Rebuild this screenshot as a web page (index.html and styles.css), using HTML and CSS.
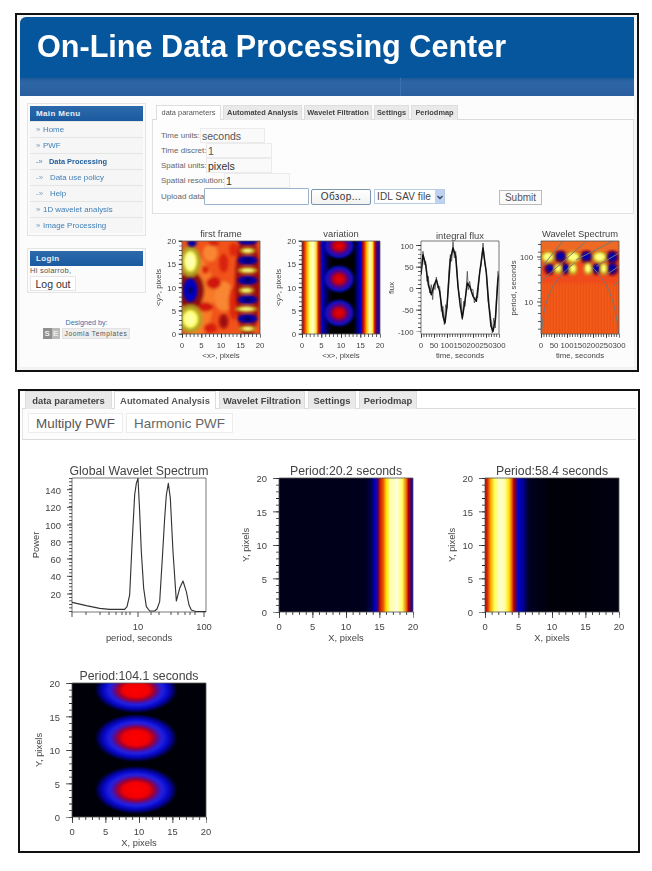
FILE: index.html
```html
<!DOCTYPE html>
<html lang="en">
<head>
<meta charset="utf-8">
<title>On-Line Data Processing Center</title>
<link rel="stylesheet" href="styles.css">
</head>
<body>
<svg class="defs" aria-hidden="true">
  <defs>
    <linearGradient id="g-var">
      <stop offset="0" stop-color="#900010"/><stop offset=".03" stop-color="#e03000"/><stop offset=".07" stop-color="#f8c000"/><stop offset=".1" stop-color="#ffff70"/><stop offset=".14" stop-color="#ffffd0"/><stop offset=".18" stop-color="#ffe040"/><stop offset=".21" stop-color="#d02000"/><stop offset=".235" stop-color="#700040"/><stop offset=".26" stop-color="#0000c0"/><stop offset=".33" stop-color="#000040"/><stop offset=".38" stop-color="#000000"/><stop offset=".66" stop-color="#000000"/><stop offset=".72" stop-color="#000090"/><stop offset=".75" stop-color="#0000d0"/><stop offset=".775" stop-color="#900020"/><stop offset=".8" stop-color="#e83000"/><stop offset=".83" stop-color="#ffc000"/><stop offset=".87" stop-color="#ffffc0"/><stop offset=".905" stop-color="#ffe040"/><stop offset=".93" stop-color="#d02000"/><stop offset=".955" stop-color="#500060"/><stop offset="1" stop-color="#0000c0"/>
    </linearGradient>
    <linearGradient id="g-p20">
      <stop offset="0" stop-color="#000018"/><stop offset=".64" stop-color="#00001c"/><stop offset=".69" stop-color="#000050"/><stop offset=".72" stop-color="#0000d0"/><stop offset=".74" stop-color="#500060"/><stop offset=".75" stop-color="#c01000"/><stop offset=".78" stop-color="#f06000"/><stop offset=".8" stop-color="#ffe000"/><stop offset=".83" stop-color="#ffffa0"/><stop offset=".88" stop-color="#ffffe0"/><stop offset=".92" stop-color="#ffff60"/><stop offset=".95" stop-color="#f07000"/><stop offset=".965" stop-color="#b00000"/><stop offset=".98" stop-color="#600050"/><stop offset="1" stop-color="#0000b0"/>
    </linearGradient>
    <linearGradient id="g-p58">
      <stop offset="0" stop-color="#a00000"/><stop offset=".02" stop-color="#e03000"/><stop offset=".04" stop-color="#f8a000"/><stop offset=".07" stop-color="#ffff50"/><stop offset=".11" stop-color="#ffffd0"/><stop offset=".15" stop-color="#ffffa0"/><stop offset=".18" stop-color="#ffe000"/><stop offset=".2" stop-color="#f06000"/><stop offset=".215" stop-color="#b00000"/><stop offset=".235" stop-color="#400070"/><stop offset=".25" stop-color="#0000d0"/><stop offset=".29" stop-color="#000080"/><stop offset=".33" stop-color="#000020"/><stop offset=".5" stop-color="#000008"/><stop offset="1" stop-color="#000010"/>
    </linearGradient>
    <radialGradient id="g-blob">
      <stop offset="0" stop-color="#ff0000"/><stop offset=".3" stop-color="#f00004"/><stop offset=".42" stop-color="#a00030"/><stop offset=".52" stop-color="#5010a0"/><stop offset=".62" stop-color="#2020e0"/><stop offset=".75" stop-color="#0808c8"/><stop offset=".88" stop-color="#000060"/><stop offset="1" stop-color="#000000" stop-opacity="0"/>
    </radialGradient>
    <radialGradient id="g-blob-v">
      <stop offset="0" stop-color="#f00000"/><stop offset=".3" stop-color="#c00010"/><stop offset=".5" stop-color="#600080"/><stop offset=".75" stop-color="#1010c0"/><stop offset="1" stop-color="#0000a0" stop-opacity="0"/>
    </radialGradient>
    <pattern id="p-stripes" width="9" height="40" patternUnits="userSpaceOnUse">
      <rect width="9" height="40" fill="#f25a18"/>
      <rect x="3" width="2.5" height="40" fill="#e84a14"/>
    </pattern>
    <filter id="f-soft" x="-5%" y="-5%" width="110%" height="110%"><feGaussianBlur stdDeviation="5"/></filter>
    <filter id="f-soft-sm" x="-5%" y="-5%" width="110%" height="110%"><feGaussianBlur stdDeviation="2.500"/></filter>
    <g id="ticks-sm">
      <path class="frame" d="M30 18H108V111H30Z"/>
      <line class="tick" x1="26.500" y1="18" x2="30" y2="18"/><line class="tick" x1="26.500" y1="41.250" x2="30" y2="41.250"/><line class="tick" x1="26.500" y1="64.500" x2="30" y2="64.500"/><line class="tick" x1="26.500" y1="87.750" x2="30" y2="87.750"/><line class="tick" x1="26.500" y1="111" x2="30" y2="111"/>
    </g>
    <g id="ticks-xy-sm">
      <line class="dash" x1="28.500" y1="18" x2="28.500" y2="111.400" stroke-width="3" stroke-dasharray=".7 3.950"/>
      <line class="dash" x1="30" y1="112.500" x2="108.400" y2="112.500" stroke-width="3" stroke-dasharray=".7 3.200"/>
      <line class="dash" x1="30" y1="113" x2="108.400" y2="113" stroke-width="4" stroke-dasharray=".7 18.800"/>
    </g>
    <g id="ticks-lg">
      <path class="frame" d="M42 18H176V152H42Z"/>
      <line class="dash" x1="39" y1="18" x2="39" y2="152.500" stroke-width="6" stroke-dasharray=".8 32.700"/>
      <line class="dash" x1="40.500" y1="18" x2="40.500" y2="152.500" stroke-width="3" stroke-dasharray=".8 5.900"/>
      <line class="dash" x1="42" y1="155" x2="176.500" y2="155" stroke-width="6" stroke-dasharray=".8 32.700"/>
      <line class="dash" x1="42" y1="153.500" x2="176.500" y2="153.500" stroke-width="3" stroke-dasharray=".8 5.900"/>
    </g>
  </defs>
</svg>

<section class="panel panel-site">
  <header class="site-head">
    <h1 class="site-title">On-Line Data Processing Center</h1>
    <div class="site-bar"><span class="site-bar-seg"></span><span class="site-bar-seg"></span></div>
  </header>
  <div class="site-body">
    <aside class="side">
      <nav class="module">
        <h2 class="module-title">Main Menu</h2>
        <a class="item" href="#"><span class="chev">»</span>Home</a>
        <a class="item" href="#"><span class="chev">»</span>PWF</a>
        <a class="item sub active" href="#"><span class="chev">-»</span>Data Processing</a>
        <a class="item sub" href="#"><span class="chev">-»</span>Data use policy</a>
        <a class="item sub" href="#"><span class="chev">-»</span>Help</a>
        <a class="item" href="#"><span class="chev">»</span>1D wavelet analysis</a>
        <a class="item" href="#"><span class="chev">»</span>Image Processing</a>
      </nav>
      <div class="module module-login">
        <h2 class="module-title login-title">Login</h2>
        <p class="hello">Hi solarrob,</p>
        <button class="logout" type="button">Log out</button>
      </div>
      <div class="credit">
        <p class="credit-line">Designed by:</p>
        <div class="badge">
          <span class="badge-mark"><span class="badge-s">S</span><span class="badge-s light">E</span></span>
          <span class="badge-text">Joomla Templates</span>
        </div>
      </div>
    </aside>
    <main class="main">
      <div class="tabs tabs-sm">
        <span class="tab current">data parameters</span>
        <span class="tab">Automated Analysis</span>
        <span class="tab">Wavelet Filtration</span>
        <span class="tab">Settings</span>
        <span class="tab">Periodmap</span>
      </div>
      <form class="params">
        <div class="row"><label class="lbl l39">Time units:</label><input class="field f65" value="seconds"></div>
        <div class="row"><label class="lbl l45">Time discret:</label><input class="field f66" value="1"></div>
        <div class="row"><label class="lbl l45">Spatial units:</label><input class="field f66 dark" value="pixels"></div>
        <div class="row"><label class="lbl l63">Spatial resolution:</label><input class="field f66 dark" value="1"></div>
        <div class="row row-up">
          <label class="lbl l43">Upload data</label>
          <span class="file"></span>
          <button class="browse" type="button">Обзор...</button>
          <span class="select">IDL SAV file<span class="arrow"><svg width="8" height="8" viewBox="0 0 8 8"><path d="M1.500 3 4 5.500 6.500 3" fill="none" stroke="#345" stroke-width="1.300"/></svg></span></span>
          <button class="submit" type="button">Submit</button>
        </div>
      </form>
      <div class="plots-sm">
        <svg class="plot-sm" width="120" height="138" viewBox="0 0 120 138">
          <text class="ttl" x="69" y="14">first frame</text>
          <svg x="30" y="18" width="78" height="93" viewBox="515 64 234 279">
            <rect x="515" y="64" width="234" height="279" fill="#f0521a"/>
            <g filter="url(#f-soft)">
              <ellipse cx="560" cy="230" rx="50" ry="120" fill="#f87a28"/>
              <ellipse cx="600" cy="100" rx="22" ry="26" fill="#f88630"/>
              <ellipse cx="640" cy="230" rx="30" ry="45" fill="#f88630"/>
              <ellipse cx="610" cy="190" rx="22" ry="18" fill="#d01808"/>
              <ellipse cx="640" cy="305" rx="14" ry="22" fill="#a00808"/>
              <ellipse cx="585" cy="262" rx="24" ry="14" fill="#d01808"/>
              <ellipse cx="600" cy="325" rx="20" ry="14" fill="#d81c08"/>
              <ellipse cx="640" cy="130" rx="14" ry="28" fill="#d82008"/>
              <ellipse cx="670" cy="250" rx="15" ry="50" fill="#e02808"/>
              <ellipse cx="585" cy="150" rx="10" ry="12" fill="#d82008"/>
              <ellipse cx="610" cy="70" rx="16" ry="10" fill="#d82008"/>
              <ellipse cx="670" cy="90" rx="14" ry="20" fill="#e02808"/>
              <ellipse cx="540" cy="212" rx="42" ry="58" fill="#901010"/>
              <ellipse cx="540" cy="125" rx="32" ry="46" fill="#b0a020"/>
              <ellipse cx="540" cy="298" rx="36" ry="42" fill="#b0a020"/>
              <ellipse cx="712" cy="195" rx="38" ry="160" fill="#a01010"/>
            </g>
            <g filter="url(#f-soft)">
              <ellipse cx="540" cy="125" rx="20" ry="32" fill="#ffff70"/>
              <ellipse cx="540" cy="298" rx="24" ry="28" fill="#ffff60"/>
              <ellipse cx="540" cy="212" rx="22" ry="36" fill="#0000c0"/>
              <ellipse cx="545" cy="70" rx="14" ry="12" fill="#0000a0"/>
              <ellipse cx="712" cy="65" rx="30" ry="10" fill="#0000b0"/>
              <ellipse cx="712" cy="122" rx="30" ry="13" fill="#0000b0"/>
              <ellipse cx="712" cy="182" rx="30" ry="13" fill="#0000b0"/>
              <ellipse cx="712" cy="240" rx="30" ry="13" fill="#0000b0"/>
              <ellipse cx="712" cy="297" rx="30" ry="13" fill="#0000b0"/>
              <ellipse cx="712" cy="93" rx="24" ry="9" fill="#c8b820"/>
              <ellipse cx="712" cy="152" rx="30" ry="9" fill="#c8b820"/>
              <ellipse cx="708" cy="212" rx="24" ry="9" fill="#c8b820"/>
              <ellipse cx="708" cy="268" rx="34" ry="9" fill="#c8b820"/>
              <ellipse cx="712" cy="327" rx="26" ry="9" fill="#c8b820"/>
            </g>
            <g filter="url(#f-soft-sm)">
              <ellipse cx="540" cy="212" rx="7" ry="10" fill="#000050" opacity=".8"/>
              <ellipse cx="540" cy="125" rx="13" ry="22" fill="#ffffc0" opacity=".8"/>
              <ellipse cx="540" cy="298" rx="15" ry="20" fill="#ffffb0" opacity=".8"/>
              <ellipse cx="712" cy="93" rx="13" ry="4" fill="#ffffa0"/>
              <ellipse cx="712" cy="152" rx="17" ry="4" fill="#ffffa0"/>
              <ellipse cx="708" cy="212" rx="13" ry="4" fill="#ffffa0"/>
              <ellipse cx="708" cy="268" rx="21" ry="4" fill="#ffffa0"/>
              <ellipse cx="712" cy="327" rx="14" ry="4" fill="#ffffa0"/>
              <ellipse cx="712" cy="122" rx="10" ry="4" fill="#000040"/>
              <ellipse cx="712" cy="182" rx="10" ry="4" fill="#000040"/>
              <ellipse cx="712" cy="240" rx="10" ry="4" fill="#000040"/>
              <ellipse cx="712" cy="297" rx="10" ry="4" fill="#000040"/>
            </g>
          </svg>
          <use href="#ticks-sm"/><use href="#ticks-xy-sm"/>
          <text class="tk end" x="24" y="21">20</text><text class="tk end" x="24" y="44">15</text><text class="tk end" x="24" y="67.500">10</text><text class="tk end" x="24" y="91">5</text><text class="tk end" x="24" y="114">0</text>
          <text class="tk mid" x="30" y="125">0</text><text class="tk mid" x="49.500" y="125">5</text><text class="tk mid" x="69" y="125">10</text><text class="tk mid" x="88.500" y="125">15</text><text class="tk mid" x="108" y="125">20</text>
          <text class="tk mid" x="69" y="134.500">&lt;x&gt;, pixels</text>
          <text class="tk mid" transform="translate(9 64.500) rotate(-90)">&lt;y&gt;, pixels</text>
        </svg>
        <svg class="plot-sm" width="120" height="138" viewBox="0 0 120 138">
          <text class="ttl" x="69" y="14">variation</text>
          <svg x="30" y="18" width="78" height="93" viewBox="0 0 78 93">
            <rect width="78" height="93" fill="url(#g-var)"/>
            <ellipse cx="37" cy="5" rx="17" ry="14" fill="url(#g-blob-v)"/>
            <ellipse cx="37" cy="38" rx="17" ry="15" fill="url(#g-blob-v)"/>
            <ellipse cx="37" cy="72" rx="17" ry="15" fill="url(#g-blob-v)"/>
          </svg>
          <use href="#ticks-sm"/><use href="#ticks-xy-sm"/>
          <text class="tk end" x="24" y="21">20</text><text class="tk end" x="24" y="44">15</text><text class="tk end" x="24" y="67.500">10</text><text class="tk end" x="24" y="91">5</text><text class="tk end" x="24" y="114">0</text>
          <text class="tk mid" x="30" y="125">0</text><text class="tk mid" x="49.500" y="125">5</text><text class="tk mid" x="69" y="125">10</text><text class="tk mid" x="88.500" y="125">15</text><text class="tk mid" x="108" y="125">20</text>
          <text class="tk mid" x="69" y="134.500">&lt;x&gt;, pixels</text>
          <text class="tk mid" transform="translate(9 64.500) rotate(-90)">&lt;y&gt;, pixels</text>
        </svg>
        <svg class="plot-sm" width="120" height="138" viewBox="0 0 120 138">
          <text class="ttl" x="69" y="15.500">integral flux</text>
          <svg x="30" y="18" width="78" height="93" viewBox="274 64 234 279">
            <polyline class="flux-g" points="274,165 278,120 280,95 284,135 288,125 292,185 296,170 300,220 305,195 309,240 312,195 316,210 320,172 324,205 330,200 335,275 340,260 344,315 348,255 352,265 358,150 362,105 366,125 370,66 374,115 378,95 385,200 390,240 394,235 398,300 402,245 406,260 413,155 416,210 420,185 424,210 430,210 434,250 440,230 444,235 450,155 455,135 460,70 465,130 470,155 475,245 480,270 484,300 488,340 492,295 497,325 500,240 505,155 508,185"/>
            <polyline class="flux" points="274,165 280,105 288,135 296,195 305,225 312,200 320,180 330,215 340,290 346,310 352,260 362,120 370,85 378,110 385,200 392,260 398,295 405,250 413,190 420,200 430,230 440,245 450,160 460,85 470,160 478,260 484,320 490,335 497,300 505,180 508,165"/>
          </svg>
          <path class="frame" d="M30 18H108V111H30Z"/>
          <line class="dash" x1="28.500" y1="22.300" x2="28.500" y2="108.600" stroke-width="3" stroke-dasharray=".7 3.600"/>
          <line class="dash" x1="27.500" y1="22.300" x2="27.500" y2="108.600" stroke-width="5" stroke-dasharray=".7 20.800"/>
          <line class="dash" x1="30" y1="112.500" x2="108.400" y2="112.500" stroke-width="3" stroke-dasharray=".7 1.900"/>
          <line class="dash" x1="30" y1="113" x2="108.400" y2="113" stroke-width="4" stroke-dasharray=".7 12.300"/>
          <text class="tk end" x="22.500" y="25.500">100</text><text class="tk end" x="22.500" y="47">50</text><text class="tk end" x="22.500" y="68.500">0</text><text class="tk end" x="22.500" y="90">-50</text><text class="tk end" x="22.500" y="111.500">-100</text>
          <text class="tk mid" x="30" y="125">0</text><text class="tk mid" x="43" y="125">50</text><text class="tk mid" x="56" y="125">100</text><text class="tk mid" x="69" y="125">150</text><text class="tk mid" x="82" y="125">200</text><text class="tk mid" x="95" y="125">250</text><text class="tk mid" x="108" y="125">300</text>
          <text class="tk mid" x="69" y="134.500">time, seconds</text>
          <text class="tk mid" transform="translate(3 65) rotate(-90)">flux</text>
        </svg>
        <svg class="plot-sm" width="120" height="138" viewBox="0 0 120 138">
          <text class="ttl" x="69" y="14">Wavelet Spectrum</text>
          <svg x="30" y="18" width="78" height="93" viewBox="634 64 234 279">
            <rect x="634" y="64" width="234" height="279" fill="url(#p-stripes)"/>
            <rect x="634" y="64" width="234" height="125" fill="#f0481a" filter="url(#f-soft)"/>
            <rect x="634" y="64" width="234" height="30" fill="#ee6a24"/>
            <g filter="url(#f-soft)">
              <ellipse cx="655" cy="112" rx="22" ry="18" fill="#c8b020"/><ellipse cx="730" cy="112" rx="24" ry="18" fill="#c8b020"/><ellipse cx="810" cy="112" rx="24" ry="18" fill="#c8b020"/>
              <ellipse cx="693" cy="112" rx="20" ry="20" fill="#700030"/><ellipse cx="770" cy="112" rx="20" ry="20" fill="#700030"/><ellipse cx="848" cy="112" rx="20" ry="20" fill="#700030"/>
              <ellipse cx="660" cy="148" rx="17" ry="18" fill="#700030"/><ellipse cx="708" cy="148" rx="15" ry="18" fill="#700030"/><ellipse cx="800" cy="148" rx="15" ry="18" fill="#700030"/><ellipse cx="848" cy="148" rx="18" ry="20" fill="#700030"/>
              <ellipse cx="685" cy="148" rx="12" ry="16" fill="#c8b020"/><ellipse cx="730" cy="148" rx="13" ry="18" fill="#c8b020"/><ellipse cx="775" cy="148" rx="13" ry="18" fill="#c8b020"/><ellipse cx="822" cy="148" rx="12" ry="18" fill="#c8b020"/>
            </g>
            <g filter="url(#f-soft-sm)">
              <ellipse cx="655" cy="112" rx="14" ry="12" fill="#ffff80"/><ellipse cx="730" cy="112" rx="16" ry="12" fill="#ffff80"/><ellipse cx="810" cy="112" rx="16" ry="12" fill="#ffff80"/>
              <ellipse cx="693" cy="110" rx="12" ry="12" fill="#0000b0"/><ellipse cx="770" cy="110" rx="12" ry="12" fill="#0000b0"/><ellipse cx="848" cy="112" rx="12" ry="14" fill="#0000b0"/>
              <ellipse cx="660" cy="146" rx="9" ry="11" fill="#0000b0"/><ellipse cx="708" cy="146" rx="8" ry="12" fill="#0000b0"/><ellipse cx="800" cy="146" rx="8" ry="12" fill="#0000b0"/><ellipse cx="848" cy="146" rx="10" ry="14" fill="#0000b0"/>
              <ellipse cx="685" cy="146" rx="8" ry="10" fill="#ffff70"/><ellipse cx="730" cy="146" rx="8" ry="11" fill="#ffff70"/><ellipse cx="775" cy="146" rx="8" ry="12" fill="#ffff80"/><ellipse cx="822" cy="146" rx="7" ry="12" fill="#ffff70"/>
            </g>
            <g class="coi">
              <path d="M636 343C640 260 655 190 735 130"/>
              <path d="M866 343C860 260 840 190 785 140"/>
              <path d="M634 145 700 64"/>
              <path d="M634 185 770 64"/>
              <path d="M740 120 850 64"/>
              <path d="M800 140 868 100"/>
              <path d="M830 165 868 140"/>
              <path d="M850 200 868 185"/>
            </g>
          </svg>
          <path class="frame" d="M30 18H108V111H30Z"/>
          <line class="tick" x1="26" y1="34" x2="30" y2="34"/><line class="tick" x1="26" y1="79" x2="30" y2="79"/>
          <line class="dash" x1="28.500" y1="21" x2="28.500" y2="111" stroke-width="3" stroke-dasharray=".7 7"/>
          <line class="dash" x1="30" y1="112.500" x2="108.400" y2="112.500" stroke-width="3" stroke-dasharray=".7 1.900"/>
          <line class="dash" x1="30" y1="113" x2="108.400" y2="113" stroke-width="4" stroke-dasharray=".7 12.300"/>
          <text class="tk end" x="22" y="37">100</text><text class="tk end" x="22" y="82">10</text>
          <text class="tk mid" x="30" y="125">0</text><text class="tk mid" x="43" y="125">50</text><text class="tk mid" x="56" y="125">100</text><text class="tk mid" x="69" y="125">150</text><text class="tk mid" x="82" y="125">200</text><text class="tk mid" x="95" y="125">250</text><text class="tk mid" x="108" y="125">300</text>
          <text class="tk mid" x="69" y="134.500">time, seconds</text>
          <text class="tk mid" transform="translate(5 65) rotate(-90)">period, seconds</text>
        </svg>
      </div>
    </main>
  </div>
</section>

<section class="panel panel-analysis">
  <div class="tabs tabs-lg">
    <span class="tab">data parameters</span>
    <span class="tab current">Automated Analysis</span>
    <span class="tab">Wavelet Filtration</span>
    <span class="tab">Settings</span>
    <span class="tab">Periodmap</span>
  </div>
  <div class="subtabs">
    <button class="subtab" type="button">Multiply PWF</button>
    <button class="subtab" type="button">Harmonic PWF</button>
  </div>
  <div class="plots-lg">
    <svg class="plot-lg" width="190" height="185" viewBox="0 0 190 185">
      <text class="ttl-lg" x="109" y="15">Global Wavelet Spectrum</text>
      <path class="frame" d="M42 18H176V152H42Z"/>
      <svg x="42" y="18" width="134" height="134" viewBox="187 280 402 400">
        <polyline class="curve" points="187,652 230,662 270,670 300,673 345,673 352,665 360,630 367,480 375,330 380,295 385,280 390,380 395,500 402,610 410,665 420,678 435,678 442,672 450,650 458,520 465,400 470,330 476,295 482,340 490,500 500,648 510,610 520,588 530,620 538,660 545,675 560,680 589,680"/>
      </svg>
      <line class="tick" x1="37" y1="29.700" x2="42" y2="29.700"/><line class="tick" x1="37" y1="47.300" x2="42" y2="47.300"/><line class="tick" x1="37" y1="65" x2="42" y2="65"/><line class="tick" x1="37" y1="82" x2="42" y2="82"/><line class="tick" x1="37" y1="99" x2="42" y2="99"/><line class="tick" x1="37" y1="116.300" x2="42" y2="116.300"/><line class="tick" x1="37" y1="134" x2="42" y2="134"/>
      <line class="dash" x1="40.500" y1="18" x2="40.500" y2="152" stroke-width="3" stroke-dasharray=".8 2.700"/>
      <path class="tick" d="M42 152v5M56 152v3M70 152v3M79 152v3M86 152v3M92 152v3M96 152v3M100 152v3M108 152v5M121 152v3M129 152v3M141 152v3M148 152v3M155 152v3M160 152v3M165 152v3M174 152v5"/>
      <text class="tk-lg end" x="31" y="33.500">140</text><text class="tk-lg end" x="31" y="51">120</text><text class="tk-lg end" x="31" y="69">100</text><text class="tk-lg end" x="31" y="86">80</text><text class="tk-lg end" x="31" y="103">60</text><text class="tk-lg end" x="31" y="120">40</text><text class="tk-lg end" x="31" y="138">20</text>
      <text class="tk-lg mid" x="108" y="169.500">10</text><text class="tk-lg mid" x="174" y="169.500">100</text>
      <text class="tk-lg mid" x="109" y="181">period, seconds</text>
      <text class="tk-lg mid" transform="translate(9 85) rotate(-90)">Power</text>
    </svg>
    <svg class="plot-lg" width="190" height="185" viewBox="0 0 190 185">
      <text class="ttl-lg" x="109" y="15">Period:20.2 seconds</text>
      <rect x="42" y="18" width="134" height="134" fill="url(#g-p20)"/>
      <use href="#ticks-lg"/>
      <text class="tk-lg end" x="30" y="22">20</text><text class="tk-lg end" x="30" y="55.500">15</text><text class="tk-lg end" x="30" y="89">10</text><text class="tk-lg end" x="30" y="122.500">5</text><text class="tk-lg end" x="30" y="156">0</text>
      <text class="tk-lg mid" x="42" y="169.500">0</text><text class="tk-lg mid" x="75.500" y="169.500">5</text><text class="tk-lg mid" x="109" y="169.500">10</text><text class="tk-lg mid" x="142.500" y="169.500">15</text><text class="tk-lg mid" x="176" y="169.500">20</text>
      <text class="tk-lg mid" x="109" y="181">X, pixels</text>
      <text class="tk-lg mid" transform="translate(12 85) rotate(-90)">Y, pixels</text>
    </svg>
    <svg class="plot-lg" width="190" height="185" viewBox="0 0 190 185">
      <text class="ttl-lg" x="109" y="15">Period:58.4 seconds</text>
      <rect x="42" y="18" width="134" height="134" fill="url(#g-p58)"/>
      <use href="#ticks-lg"/>
      <text class="tk-lg end" x="30" y="22">20</text><text class="tk-lg end" x="30" y="55.500">15</text><text class="tk-lg end" x="30" y="89">10</text><text class="tk-lg end" x="30" y="122.500">5</text><text class="tk-lg end" x="30" y="156">0</text>
      <text class="tk-lg mid" x="42" y="169.500">0</text><text class="tk-lg mid" x="75.500" y="169.500">5</text><text class="tk-lg mid" x="109" y="169.500">10</text><text class="tk-lg mid" x="142.500" y="169.500">15</text><text class="tk-lg mid" x="176" y="169.500">20</text>
      <text class="tk-lg mid" x="109" y="181">X, pixels</text>
      <text class="tk-lg mid" transform="translate(12 85) rotate(-90)">Y, pixels</text>
    </svg>
    <svg class="plot-lg" width="190" height="185" viewBox="0 0 190 185">
      <text class="ttl-lg" x="109" y="15">Period:104.1 seconds</text>
      <svg x="42" y="18" width="134" height="134" viewBox="0 0 134 134">
        <rect width="134" height="134" fill="#000008"/>
        <ellipse cx="64" cy="7" rx="43" ry="24" fill="url(#g-blob)"/>
        <ellipse cx="64" cy="55" rx="43" ry="25" fill="url(#g-blob)"/>
        <ellipse cx="64" cy="107" rx="43" ry="25" fill="url(#g-blob)"/>
      </svg>
      <use href="#ticks-lg"/>
      <text class="tk-lg end" x="30" y="22">20</text><text class="tk-lg end" x="30" y="55.500">15</text><text class="tk-lg end" x="30" y="89">10</text><text class="tk-lg end" x="30" y="122.500">5</text><text class="tk-lg end" x="30" y="156">0</text>
      <text class="tk-lg mid" x="42" y="169.500">0</text><text class="tk-lg mid" x="75.500" y="169.500">5</text><text class="tk-lg mid" x="109" y="169.500">10</text><text class="tk-lg mid" x="142.500" y="169.500">15</text><text class="tk-lg mid" x="176" y="169.500">20</text>
      <text class="tk-lg mid" x="109" y="181">X, pixels</text>
      <text class="tk-lg mid" transform="translate(12 85) rotate(-90)">Y, pixels</text>
    </svg>
  </div>
</section>
</body>
</html>
```
FILE: styles.css
```css
* { box-sizing: border-box; }
html, body { margin: 0; padding: 0; background: #fff; }
body {
  font-family: "Liberation Sans", Arial, sans-serif;
  color: #555;
  width: 652px;
  height: 871px;
  overflow: hidden;
  padding-top: 13px;
}
.defs { position: absolute; width: 0; height: 0; }

.panel { display: block; border: 2px solid #111; background: #fff; }
.panel-site {
  margin-left: 15px;
  width: 624px;
  height: 359px;
  padding: 2px 3px 0;
  background: #f4f5f6;
  box-shadow: inset 0 -4px 0 #f1f3f4;
}
.panel-analysis {
  margin: 17px 0 0 18px;
  width: 622px;
  height: 464px;
  padding: 0 2px;
}

/* header */
.site-head { background: #05569c; border-radius: 6px 0 0 0; height: 79px; display: flex; flex-direction: column; }
.site-title { margin: 0; padding: 11px 0 0 17px; height: 61px; color: #fff; font-size: 30.6px; line-height: 37px; font-weight: 700; filter: blur(.3px); }
.site-bar { height: 18px; display: flex; background: linear-gradient(#1e5a98 0, #2d66a6 4px, #2c64a4 8px, #2a5f9f 100%); }
.site-bar-seg { width: 381px; border-right: 1px solid #3a72ae; }
.site-bar-seg + .site-bar-seg { flex: 1; border: 0; }

.site-body { display: flex; height: 271px; background: #fcfcfc; }

/* sidebar */
.side { width: 132px; padding: 7px 0 0 7px; flex: none; }
.module { width: 119px; border: 1px solid #e2e5e7; background: #fbfbfb; padding: 2px; }
.module-login { margin-top: 12px; height: 45px; }
.module-title { margin: 0; height: 15px; background: linear-gradient(#2d6aac, #1b5a9f); color: #e8f0f8; font-size: 8px; line-height: 15px; padding-left: 6px; letter-spacing: .35px; font-weight: 700; }
.item { display: flex; align-items: center; height: 16px; padding-left: 6px; background: #f6f6f6; border-top: 1px solid #e4e6e6; color: #3f7fb6; font-size: 7.9px; text-decoration: none; filter: blur(.25px); }
.chev { color: #7aa5c8; width: 7px; flex: none; }
.sub .chev { width: 14px; }
.active .chev { width: 13px; }
.active { color: #1f5c99; font-weight: 700; font-size: 7.4px; }
.hello { margin: 0; font-size: 7.6px; line-height: 10px; color: #555; letter-spacing: .2px; }
.logout { display: block; margin: 0; width: 46px; height: 15px; padding: 0; background: #fff; border: 1px solid #e6e6e6; font: 10.5px "Liberation Sans", Arial, sans-serif; color: #333; }
.credit { margin-top: 25px; text-align: center; width: 119px; }
.credit-line { margin: 0; color: #3b6fb0; font-size: 7.2px; line-height: 9px; }
.badge { display: flex; justify-content: center; gap: 2px; margin-top: 1px; height: 11px; align-items: stretch; }
.badge-mark { display: flex; width: 17px; }
.badge-s { flex: 1; background: #8f8f8f; color: #eee; font-size: 8px; line-height: 11px; font-weight: 700; }
.badge-s.light { background: #bbb; }
.badge-text { width: 68px; background: #eee; border: 1px solid #e2e2e2; color: #555; font-size: 6.6px; line-height: 9px; letter-spacing: .62px; white-space: nowrap; }

/* tabs */
.main { flex: 1; padding: 9px 0 0; min-width: 0; }
.tabs { display: flex; border-bottom: 1px solid #d8dadb; }
.tab { display: block; background: #e9e9e9; border: 1px solid #ddd; border-bottom: 0; font-weight: 700; color: #444; text-align: center; white-space: nowrap; filter: blur(.25px); }
.tab.current { background: #fff; color: #555; }
.tabs-sm { height: 15px; padding-left: 4px; gap: 2px; }
.tabs-sm .tab { font-size: 7.4px; line-height: 14px; height: 15px; }
.tabs-sm .tab:nth-child(1) { width: 65px; font-weight: 400; }
.tabs-sm .tab:nth-child(2) { width: 79px; }
.tabs-sm .tab:nth-child(3) { width: 68px; }
.tabs-sm .tab:nth-child(4) { width: 35px; }
.tabs-sm .tab:nth-child(5) { width: 47px; }

.tabs-lg { height: 18px; padding-left: 3px; gap: 2px; }
.tabs-lg .tab { font-size: 9.4px; line-height: 17px; height: 18px; }
.tabs-lg .tab:nth-child(1) { width: 87px; }
.tabs-lg .tab:nth-child(2) { width: 102px; }
.tabs-lg .tab:nth-child(3) { width: 86px; margin-left: 1px; }
.tabs-lg .tab:nth-child(4) { width: 48px; margin-left: 1px; }
.tabs-lg .tab:nth-child(5) { width: 58px; margin-left: 1px; }

/* form */
.params { height: 94px; background: #fdfdfd; border: 1px solid #dfe1e2; border-top: 0; padding: 8px 0 0 8px; }
.row { display: flex; height: 15px; align-items: center; }
.lbl { font-size: 8px; color: #666; white-space: nowrap; }
.l39 { width: 39px; } .l45 { width: 45px; } .l63 { width: 63px; } .l43 { width: 43px; }
.field { height: 15px; border: 1px solid #ebebeb; background: #fafafa; font: 10.5px "Liberation Sans", Arial, sans-serif; color: #555; padding: 0 1px; outline: 0; }
.field.dark { color: #333; }
.f65 { width: 65px; } .f66 { width: 66px; }
.row-up { height: 17px; }
.file { width: 105px; height: 17px; background: #fff; border: 1px solid #9ab3cc; border-radius: 1px; }
.browse { margin-left: 2px; width: 60px; height: 16px; padding: 0; background: linear-gradient(#fff, #f2f2f0); border: 1px solid #7c94ac; border-radius: 2px; font: 10px "Liberation Sans", Arial, sans-serif; color: #333; letter-spacing: .4px; }
.select { margin-left: 3px; width: 71px; height: 15px; display: flex; align-items: center; justify-content: space-between; padding-left: 2px; background: #fff; border: 1px solid #b8cce4; font-size: 10px; color: #444; white-space: nowrap; letter-spacing: .1px; }
.arrow { width: 9px; height: 13px; background: #c0d2f2; display: flex; align-items: center; justify-content: center; }
.submit { margin-left: 54px; margin-top: 2px; width: 43px; height: 15px; padding: 0; background: #fafafa; border: 1px solid #bbb; font: 10px "Liberation Sans", Arial, sans-serif; color: #555; }

/* small plots */
.plots-sm { display: flex; margin: 9px 0 0; filter: blur(.25px); }
.plot-sm { flex: none; display: block; overflow: visible; }
.plot-sm:nth-child(3) { margin-left: -1px; }
.ttl { font-size: 9.4px; fill: #444; text-anchor: middle; }
.tk { font-size: 7.8px; fill: #444; }
.end { text-anchor: end; }
.mid { text-anchor: middle; }
.frame { fill: none; stroke: #555; stroke-width: .8; }
.tick { fill: none; stroke: #222; stroke-width: .8; }
.dash { fill: none; stroke: #222; }
.flux { fill: none; stroke: #111; stroke-width: 4.5; stroke-linejoin: round; }
.flux-g { fill: none; stroke: #555; stroke-width: 2.6; }
.coi path { fill: none; stroke: #777; stroke-width: 3; }

/* analysis */
.subtabs { display: flex; gap: 3px; height: 31px; padding: 4px 0 0 5px; background: #fcfcfc; border-bottom: 1px solid #d8dadb; border-left: 1px solid #e6e6e6; }
.subtab { height: 20px; padding: 0; background: #fff; border: 1px solid #ececec; font: 13.4px "Liberation Sans", Arial, sans-serif; color: #555; }
.subtab:nth-child(1) { width: 95px; }
.subtab:nth-child(2) { width: 107px; color: #666; }
.plots-lg { display: grid; grid-template-columns: 190px 190px 190px; column-gap: 17px; row-gap: 20px; padding: 20px 0 0 8px; justify-content: start; filter: blur(.25px); }
.plot-lg { display: block; overflow: visible; }
.plot-lg:nth-child(3) { margin-left: -1px; }
.ttl-lg { font-size: 12.3px; fill: #444; text-anchor: middle; }
.tk-lg { font-size: 9.4px; fill: #444; }
.curve { fill: none; stroke: #333; stroke-width: 3.4; stroke-linejoin: round; }
```
